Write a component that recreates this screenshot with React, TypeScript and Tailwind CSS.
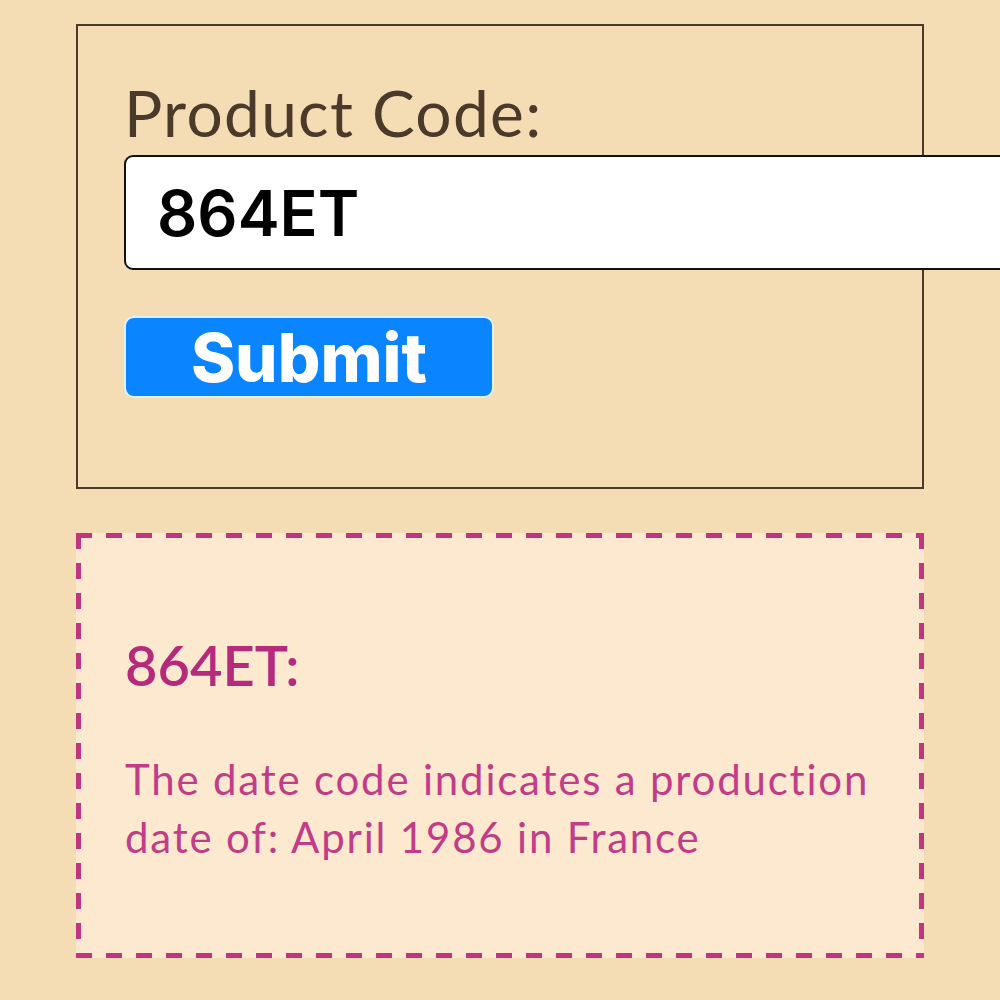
import { useState } from 'react';

function App() {
  const [code, setCode] = useState('864ET');

  return (
    <div className="min-h-screen w-full overflow-hidden bg-[#f4dcb4] px-[76px] pt-[24px] font-['Lato',sans-serif]">
      {/* Lookup form */}
      <div className="border-2 border-[#4a3a2a] pl-[46px] pt-[51px] pb-[89px]">
        <label className="block text-[64px] leading-[72px] tracking-[1.3px] text-[#4b3a29]">Product Code:</label>
        <input
          value={code}
          onChange={(e) => setCode(e.target.value)}
          className="mt-[6px] block h-[115px] w-[900px] rounded-[9px] border-2 border-[#111] bg-white pl-[31px] font-['Inter',sans-serif] text-[63px] font-semibold text-black outline-none"
        />
        <button className="mt-[46px] flex h-[82px] w-[370px] items-center justify-center rounded-[10px] border-2 border-[#dff0ff] bg-[#0a84ff] font-['Inter',sans-serif] text-[67px] font-extrabold leading-none text-white">
          Submit
        </button>
      </div>

      {/* Result, dashed frame drawn with gradients to get the long dashes */}
      <div className="mt-[44px] p-[5px] [background:repeating-linear-gradient(90deg,#c0357f_0_16px,transparent_16px_30px)_top_left/100%_5px_no-repeat,repeating-linear-gradient(90deg,#c0357f_0_16px,transparent_16px_30px)_bottom_left/100%_5px_no-repeat,repeating-linear-gradient(180deg,#c0357f_0_16px,transparent_16px_30px)_top_left/5px_100%_no-repeat,repeating-linear-gradient(180deg,#c0357f_0_16px,transparent_16px_30px)_top_right/5px_100%_no-repeat,#fde8d0]">
        <div className="pl-[44px] pr-[30px] pt-[95px] pb-[87px]">
          <h2 className="text-[56px] leading-[64px] font-semibold text-[#b62a7c]">{code}:</h2>
          <p className="mt-[53px] text-[42px] leading-[58px] tracking-[1.8px] text-[#c23d88]">
            The date code indicates a production date of: April 1986 in France
          </p>
        </div>
      </div>
    </div>
  );
}

export default App;
